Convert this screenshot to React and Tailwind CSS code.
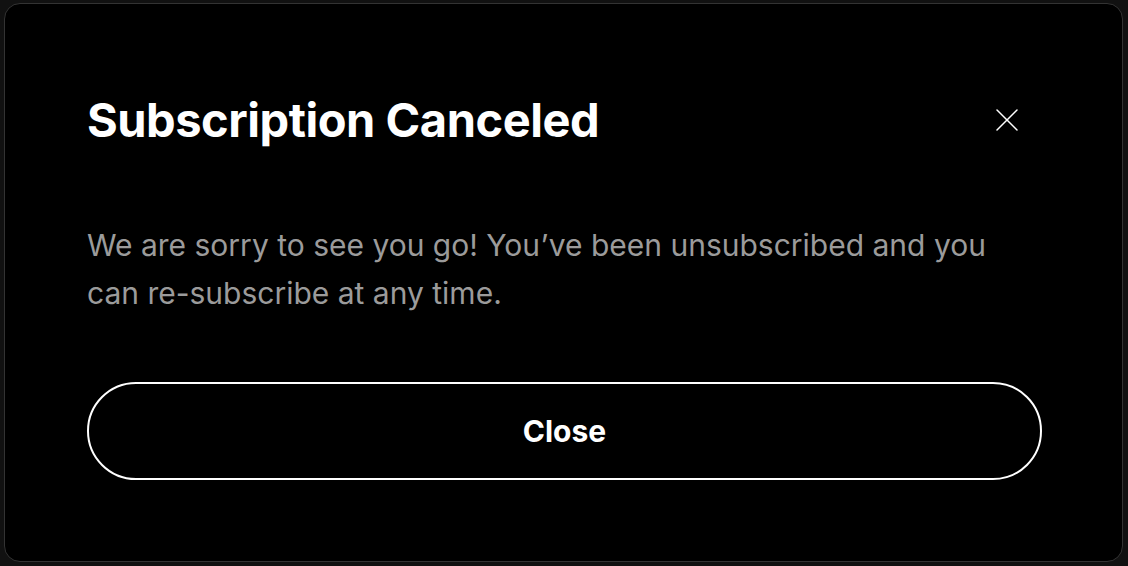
import { X } from "lucide-react";

const App = () => {
    return (
        <div className="w-[1128px] h-[566px] bg-[#111111] pt-[3px] pr-[5px] pb-[4px] pl-[4px] font-['Inter',sans-serif]">
            <div className="h-full rounded-[16px] border-[1.5px] border-[#333333] bg-black pl-[82px] pr-[80px] pt-[88px]">
                {/* Header */}
                <div className="flex items-center justify-between">
                    <h2 className="text-[47px] leading-[56px] font-bold tracking-[-0.01em] text-white">
                        Subscription Canceled
                    </h2>
                    <button className="w-[70px] h-[56px] flex items-center justify-center text-white">
                        <X size={40} strokeWidth={1.5} absoluteStrokeWidth />
                    </button>
                </div>

                {/* Message */}
                <p className="mt-[73px] text-[30px] leading-[48px] text-[#9b9b9b]">
                    We are sorry to see you go! You’ve been unsubscribed and you
                    <br />
                    can re-subscribe at any time.
                </p>

                {/* Action */}
                <button className="mt-[65px] w-full h-[98px] rounded-full border-2 border-white text-white text-[30px] font-bold">
                    Close
                </button>
            </div>
        </div>
    );
};

export default App;
